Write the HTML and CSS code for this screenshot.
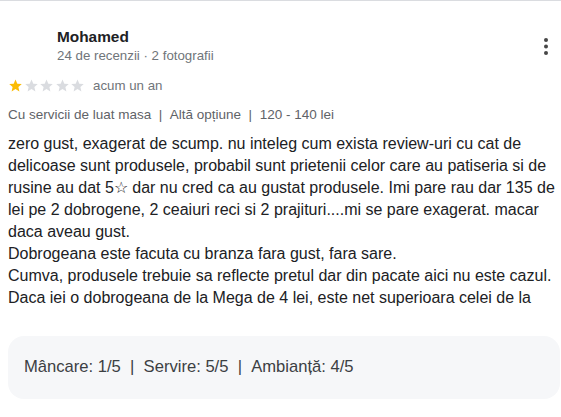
FILE: index.html
```html
<!DOCTYPE html>
<html lang="ro">
<head>
<meta charset="utf-8">
<link rel="stylesheet" href="styles.css">
</head>
<body>
<div class="review">
  <div class="header">
    <div class="avatar"></div>
    <div class="who">
      <div class="name">Mohamed</div>
      <div class="meta">24 de recenzii · 2 fotografii</div>
    </div>
    <div class="more">
      <svg width="6" height="19" viewBox="0 0 6 19"><circle cx="3" cy="3" r="2"/><circle cx="3" cy="9.5" r="2"/><circle cx="3" cy="16" r="2"/></svg>
    </div>
  </div>
  <div class="rating">
    <div class="stars">
      <svg viewBox="0 0 24 24" class="star on"><path d="M12 2.5l2.9 6.6 7.1.6-5.4 4.7 1.6 7-6.2-3.7-6.2 3.7 1.6-7L2 9.7l7.1-.6z"/></svg>
      <svg viewBox="0 0 24 24" class="star"><path d="M12 2.5l2.9 6.6 7.1.6-5.4 4.7 1.6 7-6.2-3.7-6.2 3.7 1.6-7L2 9.7l7.1-.6z"/></svg>
      <svg viewBox="0 0 24 24" class="star"><path d="M12 2.5l2.9 6.6 7.1.6-5.4 4.7 1.6 7-6.2-3.7-6.2 3.7 1.6-7L2 9.7l7.1-.6z"/></svg>
      <svg viewBox="0 0 24 24" class="star"><path d="M12 2.5l2.9 6.6 7.1.6-5.4 4.7 1.6 7-6.2-3.7-6.2 3.7 1.6-7L2 9.7l7.1-.6z"/></svg>
      <svg viewBox="0 0 24 24" class="star"><path d="M12 2.5l2.9 6.6 7.1.6-5.4 4.7 1.6 7-6.2-3.7-6.2 3.7 1.6-7L2 9.7l7.1-.6z"/></svg>
    </div>
    <span class="when">acum un an</span>
  </div>
  <div class="tags">Cu servicii de luat masa&nbsp; | &nbsp;Altă opțiune&nbsp; | &nbsp;120 - 140 lei</div>
  <div class="text">zero gust, exagerat de scump. nu inteleg cum exista review-uri cu cat de delicoase sunt produsele, probabil sunt prietenii celor care au patiseria si de rusine au dat 5☆ dar nu cred ca au gustat produsele. Imi pare rau dar 135 de lei pe 2 dobrogene, 2 ceaiuri reci si 2 prajituri....mi se pare exagerat. macar daca aveau gust.<br>Dobrogeana este facuta cu branza fara gust, fara sare.<br>Cumva, produsele trebuie sa reflecte pretul dar din pacate aici nu este cazul.<br>Daca iei o dobrogeana de la Mega de 4 lei, este net superioara celei de la</div>
  <div class="scores">Mâncare: 1/5&nbsp; | &nbsp;Servire: 5/5&nbsp; | &nbsp;Ambianță: 4/5</div>
</div>
</body>
</html>
```

FILE: styles.css
```css
html, body {
  margin: 0;
  padding: 0;
  background: #fff;
}
body {
  font-family: "Liberation Sans", Arial, sans-serif;
  color: #202124;
}
.review {
  border-top: 1px solid #dadce0;
  padding: 0 1px 0 8px;
}
.header {
  display: flex;
  align-items: flex-start;
  padding-top: 26px;
}
.avatar {
  width: 40px;
  height: 40px;
  margin-right: 9px;
  flex: none;
}
.who {
  flex: 1;
}
.name {
  font-size: 15.4px;
  font-weight: bold;
  line-height: 20px;
  color: #202124;
}
.meta {
  font-size: 13.3px;
  line-height: 18px;
  color: #70757a;
}
.more {
  width: 20px;
  display: flex;
  justify-content: center;
  padding-top: 10px;
  margin-right: 4px;
}
.more svg {
  fill: #474747;
  display: block;
}
.rating {
  display: flex;
  align-items: center;
  margin-top: 8px;
  height: 20px;
}
.stars {
  display: flex;
  gap: 0.5px;
  margin-right: 8px;
}
.star {
  width: 15px;
  height: 15px;
  fill: #dadce0;
  display: block;
}
.star.on {
  fill: #fbbc04;
}
.when {
  font-size: 13.3px;
  color: #70757a;
}
.tags {
  margin-top: 11px;
  font-size: 13.5px;
  line-height: 18px;
  color: #5f6368;
}
.text {
  margin-top: 9px;
  font-size: 16px;
  line-height: 22px;
  color: #202124;
}
.scores {
  margin-top: 27px;
  background: #f6f7f9;
  border-radius: 16px;
  padding: 21px 16px 22px;
  font-size: 16.6px;
  line-height: 20px;
  color: #3c4043;
}
```
